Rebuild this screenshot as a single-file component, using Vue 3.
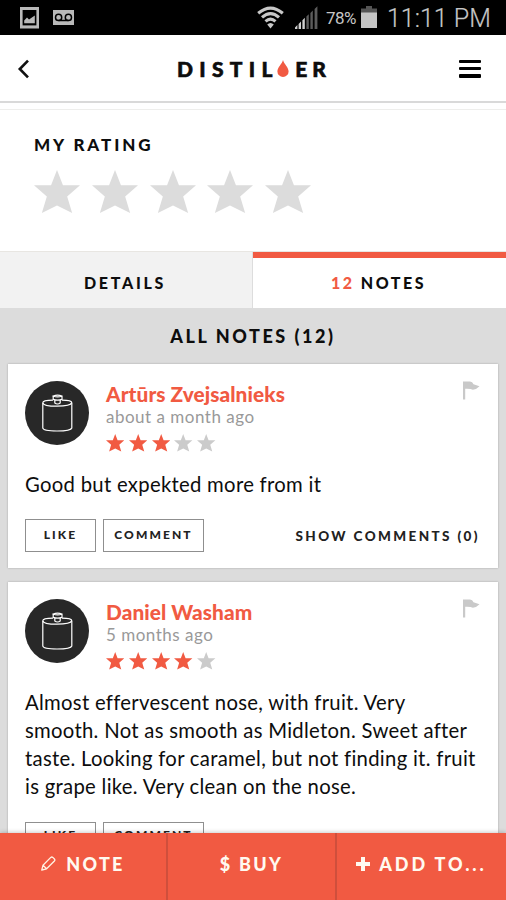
<script setup>
const starPoints = '12,0 15.1,7.8 24,7.8 17.3,13.6 19.9,22 12,18.2 4.1,22 6.7,13.6 0,7.8 8.9,7.8'

const notes = [
  {
    id: 1,
    author: 'Artūrs Zvejsalnieks',
    time: 'about a month ago',
    rating: 3,
    text: 'Good but expekted more from it',
    comments: 0,
    cls: 'first',
  },
  {
    id: 2,
    author: 'Daniel Washam',
    time: '5 months ago',
    rating: 4,
    text: 'Almost effervescent nose, with fruit. Very\nsmooth. Not as smooth as Midleton. Sweet after\ntaste. Looking for caramel, but not finding it. fruit\nis grape like. Very clean on the nose.',
    comments: 0,
    cls: 'second',
  },
]
</script>

<template>
  <div class="phone">
    <div class="status">
      <svg class="s-image" width="19" height="22" viewBox="0 0 19 22">
        <rect width="19" height="21.5" fill="#b9b9b9" />
        <rect x="2.6" y="3" width="13.8" height="15.4" fill="#000" />
        <path d="M4.2 16.2V13.4L7 10.6L9 12.4L14.8 8.4V16.2Z" fill="#b9b9b9" />
      </svg>
      <svg class="s-voice" width="21" height="15" viewBox="0 0 21 15">
        <rect width="21" height="15" fill="#b9b9b9" />
        <g fill="none" stroke="#000" stroke-width="1.5">
          <circle cx="5.6" cy="7.4" r="3.1" />
          <circle cx="15.4" cy="7.4" r="3.1" />
          <path d="M5.6 10.5H15.4" />
        </g>
      </svg>
      <span class="spacer"></span>
      <svg class="s-wifi" width="27" height="23" viewBox="0 0 27 23" fill="none" stroke="#c8c8c8" stroke-width="3.1">
        <path d="M1.2 7.3Q13.5 -3.2 25.8 7.3" />
        <path d="M5 11.4Q13.5 3.8 22 11.4" />
        <path d="M8.5 15.4Q13.5 11 18.5 15.4" />
        <path d="M10.2 18.6Q13.5 15.6 16.8 18.6L13.5 22.4Z" fill="#c8c8c8" stroke="none" />
      </svg>
      <svg class="s-signal" width="23" height="23" viewBox="0 0 23 23">
        <path d="M0 23V21.5L2.4 19V23ZM3.6 23V18L6 15.6V23ZM7.4 23V14.2L9.8 11.8V23Z" fill="#d0d0d0" />
        <path d="M11.4 23V10.6L13.8 8.2V23ZM15.4 23V7L17.8 4.6V23ZM19.6 23V3L22.4 .2V23Z" fill="#5c5c5c" />
      </svg>
      <span class="percent">78%</span>
      <svg class="s-battery" width="16" height="22" viewBox="0 0 16 22">
        <path d="M5 0H11V2.5H16V7H0V2.5H5Z" fill="#555" />
        <rect y="6.5" width="16" height="15.5" fill="#c4c4c4" />
      </svg>
      <span class="clock">11:11 PM</span>
    </div>

    <header class="header">
      <svg width="13" height="20" viewBox="0 0 13 20" class="back">
        <path d="M11 1.6L2.8 10L11 18.4" fill="none" stroke="#111" stroke-width="2.6" />
      </svg>
      <div class="logo">
        <span class="l1">DISTIL</span>
        <svg width="12" height="17" viewBox="0 0 12 17">
          <path d="M6 0C7 4.2 11.6 7.3 11.6 11.4A5.6 5.5 0 0 1 .4 11.4C.4 7.3 5 4.2 6 0Z" fill="#f15a42" />
        </svg>
        <span class="l2">ER</span>
      </div>
      <div class="menu"><i></i><i></i><i></i></div>
    </header>

    <section class="rating">
      <h2>MY RATING</h2>
      <div class="big-stars">
        <svg v-for="n in 5" :key="n" width="46" height="43" viewBox="0 0 24 22" preserveAspectRatio="none">
          <polygon :points="starPoints" fill="#dcdcdc" />
        </svg>
      </div>
    </section>

    <nav class="tabs">
      <div class="tab"><span>DETAILS</span></div>
      <div class="tab active"><span><b>12</b> NOTES</span></div>
    </nav>

    <main class="notes">
      <h3>ALL NOTES (12)</h3>
      <article v-for="note in notes" :key="note.id" class="card" :class="note.cls">
        <div class="top">
          <svg class="avatar" width="64" height="64" viewBox="0 0 64 64">
            <circle cx="32" cy="32" r="32" fill="#282828" />
            <g fill="none" stroke="#fff" stroke-width="1.2">
              <path d="M17.8 22V47Q18 50 32 50T46.8 47V22" />
              <path d="M28 19.2Q17.8 19.2 17.8 21.8Q18.5 25.2 32 25.2T46.8 21.8Q46.8 19.2 37 19.2" />
              <path d="M28.2 15V18.4Q32.5 20 37 18.4V15Q32.5 13.4 28.2 15Q32.5 16.8 37 15M29.8 19.4V22Q32.5 24 35.2 22V19.4" />
            </g>
          </svg>
          <div class="meta">
            <div class="author">{{ note.author }}</div>
            <div class="time">{{ note.time }}</div>
            <div class="stars">
              <svg v-for="n in 5" :key="n" width="18.4" height="17.5" viewBox="0 0 24 22" preserveAspectRatio="none">
                <polygon :points="starPoints" :fill="n <= note.rating ? '#f15a42' : '#cbcbcb'" />
              </svg>
            </div>
          </div>
          <svg class="flag" width="17" height="19" viewBox="0 0 17 19">
            <path d="M0 .5H7Q9.5 .8 10.5 3.2L16.5 5.2Q13 8.8 9.8 8.7Q8 7.6 2.2 7.8V18.5H0Z" fill="#c9c9c9" />
          </svg>
        </div>
        <p>{{ note.text }}</p>
        <div class="actions">
          <button class="like">LIKE</button>
          <button class="comment">COMMENT</button>
          <span class="show">SHOW COMMENTS ({{ note.comments }})</span>
        </div>
      </article>
    </main>

    <footer class="bar">
      <div class="act a-note">
        <svg width="15" height="15" viewBox="0 0 15 15" fill="none" stroke="#fff3e3" stroke-width="1.3" stroke-linejoin="round">
          <path d="M.8 14L2 9.2L9.8 1.4Q10.8 .5 11.8 1.4L13.4 3Q14.3 4 13.4 5L5.6 12.8ZM2 9.2L5.6 12.8" />
        </svg>
        <span>NOTE</span>
      </div>
      <div class="act a-buy"><span>$ BUY</span></div>
      <div class="act a-add">
        <svg width="14" height="14" viewBox="0 0 14 14">
          <path d="M5 0H9V5H14V9H9V14H5V9H0V5H5Z" fill="#fffaf0" />
        </svg>
        <span>ADD TO...</span>
      </div>
    </footer>
  </div>
</template>

<style>
body {
  background: #fff;
}
</style>

<style scoped>
.phone {
  width: 506px;
  height: 900px;
  overflow: hidden;
  display: flex;
  flex-direction: column;
  background: #fff;
  color: #0d0d0d;
  font-family: Lato, "Liberation Sans", sans-serif;
  white-space: nowrap;
}
.phone * {
  box-sizing: border-box;
}
.phone svg {
  display: block;
  flex: none;
}
.status {
  height: 35px;
  flex: none;
  display: flex;
  align-items: flex-start;
  background: #000;
  color: #c6c6c6;
  padding: 0 14px 0 20px;
  font-family: Roboto, sans-serif;
}
.s-image { margin-top: 7px; }
.s-voice { margin: 10px 0 0 14px; }
.spacer { flex: 1; }
.s-wifi { margin: 6px 11px 0 0; }
.s-signal { margin: 6px 8px 0 0; }
.percent {
  width: 35px;
  font-size: 17px;
  line-height: 20px;
  margin-top: 8px;
  letter-spacing: -0.6px;
}
.s-battery { margin-top: 6px; }
.clock {
  width: 105px;
  margin-left: 10px;
  font-size: 25px;
  line-height: 30px;
  margin-top: 4px;
  font-weight: 300;
  -webkit-text-stroke: 0.2px #c6c6c6;
}
.header {
  height: 75px;
  flex: none;
  display: flex;
  align-items: center;
  padding: 0 25px 7px 17px;
  border-bottom: 1px solid #eeeeec;
  background: linear-gradient(#fff 66px, #d9d9d9 66px, #d9d9d9 68px, #fff 68px);
}
.logo {
  display: flex;
  align-items: center;
  font-size: 21px;
  font-weight: 900;
  line-height: 24px;
  margin-left: 147px;
  -webkit-text-stroke: 0.6px #0d0d0d;
}
.l1 { letter-spacing: 6.3px; }
.l2 { letter-spacing: 5px; }
.logo svg { margin-right: 6px; margin-left: -1.5px; }
.menu {
  width: 22px;
  height: 18px;
  margin-left: auto;
  display: flex;
  flex-direction: column;
  justify-content: space-between;
}
.menu i {
  height: 3.5px;
  background: #000;
  border-radius: 1px;
}
.rating {
  height: 141px;
  flex: none;
  padding: 24px 34px 0;
}
h2, h3, p { margin: 0; }
h2 {
  font-size: 17px;
  line-height: 22px;
  letter-spacing: 2.9px;
  font-weight: 900;
}
.big-stars {
  display: flex;
  gap: 11.8px;
  margin-top: 14px;
}
.tabs {
  display: grid;
  grid-template-columns: 253px 253px;
  flex: none;
  height: 57px;
  border-top: 1px solid #e8e6e2;
}
.tab {
  display: flex;
  align-items: center;
  justify-content: center;
  background: #f2f2f2;
  border-right: 1px solid #ddd;
  font-size: 16px;
  font-weight: 900;
  letter-spacing: 2.7px;
  padding: 5px 2px 0 0;
}
.tab.active {
  background: #fff;
  border-right: 0;
  border-top: 6px solid #f15a42;
  padding-top: 0;
  padding-bottom: 1px;
  letter-spacing: 2.5px;
}
.tab b { color: #f15a42; }
.notes {
  flex: 1;
  min-height: 0;
  overflow: hidden;
  background: #dcdcdc;
  padding: 0 8px;
}
h3 {
  height: 56px;
  line-height: 57px;
  text-align: center;
  font-size: 18px;
  font-weight: 900;
  letter-spacing: 2.55px;
}
.card {
  background: #fff;
  height: 204px;
  margin-bottom: 14px;
  padding: 17px 18px 0 17px;
  box-shadow: 0 0 2px rgba(0, 0, 0, 0.25);
}
.card.second { height: 320px; }
.top {
  display: flex;
  height: 74px;
}
.meta {
  flex: 1;
  margin-left: 17px;
  padding-top: 1px;
}
.author {
  color: #f15a42;
  font-size: 20.8px;
  line-height: 24px;
  font-weight: 900;
  letter-spacing: 0.08px;
}
.time {
  color: #999;
  font-size: 17px;
  line-height: 22px;
  letter-spacing: 0.5px;
}
.stars {
  display: flex;
  gap: 4.4px;
  margin-top: 6px;
}
p {
  white-space: pre-line;
  font-size: 20.3px;
  line-height: 28px;
  margin-top: 15px;
  letter-spacing: 0.29px;
}
.actions {
  display: flex;
  align-items: center;
  height: 33px;
  margin-top: 21px;
  gap: 7px;
}
.second .actions { margin-top: 22px; }
button {
  height: 33px;
  padding: 0 0 2px;
  background: #fff;
  border: 1px solid #8f8f8f;
  color: #222;
  font: 900 12px Lato, sans-serif;
  letter-spacing: 2.1px;
}
.second button { padding-bottom: 8px; }
.like { width: 71px; }
.comment { width: 101px; }
.show {
  margin-left: auto;
  color: #222;
  font-size: 13.5px;
  font-weight: 900;
  letter-spacing: 2.4px;
}
.bar {
  position: relative;
  height: 67px;
  flex: none;
  display: grid;
  grid-template-columns: 168px 169px 169px;
  background: #f15a42;
  color: #fffaf0;
  box-shadow: 0 -1px 4px rgba(0, 0, 0, 0.2);
}
.act {
  display: flex;
  align-items: center;
  justify-content: center;
  padding-bottom: 6px;
  border-right: 2px solid #cf4f3c;
  font-size: 18px;
  font-weight: 900;
  letter-spacing: 2.3px;
}
.act:last-child { border-right: 0; letter-spacing: 2.9px; }
.act svg { margin-right: 10px; }
.a-add svg { margin-right: 9px; }
</style>
